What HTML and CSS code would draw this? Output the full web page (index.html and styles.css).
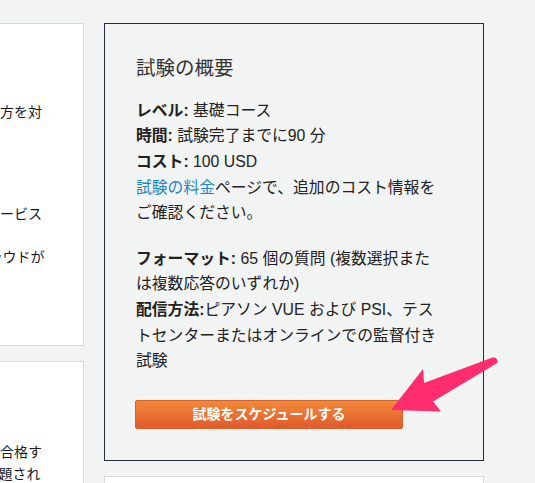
FILE: index.html
```html
<!DOCTYPE html>
<html lang="ja">
<head>
<meta charset="utf-8">
<title>試験の概要</title>
<link rel="stylesheet" href="styles.css">
</head>
<body>
<div class="page">
  <aside class="side">
    <section class="side-card side-card--first">
      <p class="side-text">クラウドの基本的な知識を示す方を対<br>象としています。</p>
      <p class="side-text">推奨される知識<br>・IT の基礎知識<br>クラウドの主要な概念と各種サービス<br>の理解<br>AWSのセキュリティ対策とクラウドが</p>
    </section>
    <section class="side-card side-card--second">
      <p class="side-text">認定を取得するにはこの試験に合格す<br>る必要があります。試験では出題され<br>た問題に回答します。</p>
    </section>
  </aside>
  <main class="main">
    <section class="overview">
      <h2 class="overview-title">試験の概要</h2>
      <p class="overview-text"><b>レベル:</b> 基礎コース<br><b>時間:</b> 試験完了までに90 分<br><b>コスト:</b> 100 USD<br><a class="link" href="#">試験の料金</a>ページで、追加のコスト情報を<br>ご確認ください。</p>
      <p class="overview-text overview-text--last"><b>フォーマット:</b> 65 個の質問 (複数選択また<br>は複数応答のいずれか)<br><b>配信方法:</b>ピアソン VUE および PSI、テス<br>トセンターまたはオンラインでの監督付き<br>試験</p>
      <a class="btn" href="#">試験をスケジュールする</a>
    </section>
    <section class="next-card"></section>
  </main>
</div>
<svg class="arrow" width="535" height="483" viewBox="0 0 535 483" aria-hidden="true">
  <path d="M391 410 L423 369 L424 383 L492.5 357.5 Q497 357 497.5 361 Q497.5 363.5 495.5 364 L433 401.5 L441 411.5 Z" fill="#ff2d6e"/>
</svg>
</body>
</html>
```

FILE: styles.css
```css
html, body {
  margin: 0;
  padding: 0;
}

body {
  width: 535px;
  height: 483px;
  overflow: hidden;
  background: #f2f3f3;
  font-family: "Liberation Sans", "Noto Sans CJK JP", sans-serif;
  color: #16191f;
  position: relative;
}

.page {
  display: flex;
  gap: 20px;
  padding-top: 23px;
}

.side {
  flex: 0 0 300px;
  margin-left: -216px;
  display: flex;
  flex-direction: column;
  gap: 15px;
}

.side-card {
  background: #fff;
  border: 1px solid #d5dbdb;
  padding: 0 19px;
  box-sizing: border-box;
}

.side-card--first {
  padding-top: 78px;
  height: 323px;
}

.side-card--second {
  padding-top: 80px;
  height: 200px;
}

.side-text {
  margin: 0 0 16px;
  font-size: 14px;
  line-height: 21.5px;
  white-space: nowrap;
}

.main {
  flex: 0 0 380px;
  display: flex;
  flex-direction: column;
  gap: 15px;
}

.overview {
  border: 1px solid #232f3e;
  background: #f2f3f3;
  padding: 32px 31px 31px;
}

.overview-title {
  margin: 0 0 16.5px;
  font-size: 19.5px;
  line-height: 1.3;
  font-weight: normal;
  color: #333;
}

.overview-text {
  margin: 0 0 20px;
  font-size: 15.8px;
  line-height: 25.6px;
  color: #222;
  white-space: nowrap;
}

.overview-text--last {
  margin-bottom: 26px;
}

.overview-text b {
  font-weight: bold;
}

.link {
  color: #1f86c8;
  text-decoration: none;
}

.btn {
  display: block;
  box-sizing: border-box;
  width: 268px;
  height: 29px;
  margin-left: -1px;
  border: 1px solid #d9622c;
  border-radius: 2px;
  background: linear-gradient(#f18a3a, #e15a2c);
  color: #fff;
  font-size: 14px;
  font-weight: bold;
  line-height: 27px;
  text-align: center;
  text-decoration: none;
}

.next-card {
  background: #fff;
  border: 1px solid #d5dbdb;
  height: 100px;
}

.arrow {
  position: absolute;
  top: 0;
  left: 0;
  pointer-events: none;
}
```
